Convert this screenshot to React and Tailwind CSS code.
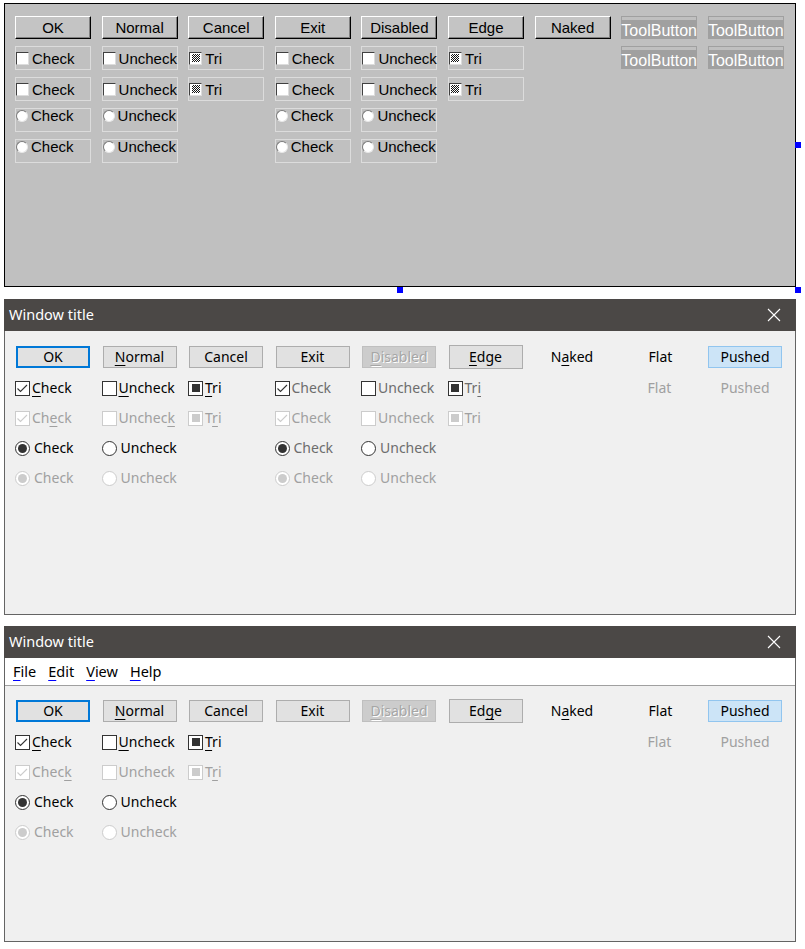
import React from 'react'

const CLASSIC = "font-['Liberation_Sans',Arial,sans-serif]"
const MODERN = "font-['Noto_Sans','Open_Sans',sans-serif]"

// text with one underlined mnemonic letter
function Label({ text, u, blue }) {
  if (u == null) return text
  return (
    <>
      {text.slice(0, u)}
      <span className={blue ? 'underline decoration-[#0000ff] underline-offset-[3px]' : 'underline underline-offset-[3px]'}>{text[u]}</span>
      {text.slice(u + 1)}
    </>
  )
}

/* ---------- classic (first panel) ---------- */

function ClassicButton({ label }) {
  return (
    <div className="flex h-[23px] w-[76px] items-center justify-center border border-t-white border-l-white border-r-black border-b-black bg-[#c4c4c4] text-[15px] leading-none text-black shadow-[inset_-1px_-1px_0_#808080]">
      {label}
    </div>
  )
}

function ClassicCheck({ label, kind }) {
  const radio = kind === 'radio'
  return (
    <div className={`flex h-[24px] w-[76px] gap-[3px] border border-[#dcdcdc] text-[15px] text-black ${radio ? 'items-start' : 'items-center'}`}>
      {radio ? (
        <span className="mt-[1px] h-[12px] w-[12px] shrink-0 rounded-full border border-t-[#7a7a7a] border-l-[#7a7a7a] border-r-[#e8e8e8] border-b-[#e8e8e8] bg-white" />
      ) : (
        <span className="flex h-[13px] w-[13px] shrink-0 items-center justify-center border border-t-[#404040] border-l-[#404040] border-r-[#dcdcdc] border-b-[#dcdcdc] bg-white">
          {kind === 'tri' && (
            <span className="h-[8px] w-[8px] bg-[image:repeating-conic-gradient(#111_0_25%,#fff_0_50%)] bg-[length:2px_2px]" />
          )}
        </span>
      )}
      <span className={radio ? 'leading-[13px]' : 'leading-none pt-[1px]'}>{label}</span>
    </div>
  )
}

function ToolButton() {
  return (
    <div className="flex h-[23px] w-[76px] flex-col border border-[#a0a0a0]">
      <div className="h-[3px] shrink-0" />
      <div className="flex flex-1 items-center justify-center whitespace-nowrap bg-[#a0a0a0] pt-[3px] text-[16px] leading-none text-white">ToolButton</div>
    </div>
  )
}

function ClassicPanel() {
  const checkRow = [
    <ClassicCheck key="a" label="Check" />,
    <ClassicCheck key="b" label="Uncheck" />,
    <ClassicCheck key="c" label="Tri" kind="tri" />,
    <ClassicCheck key="d" label="Check" />,
    <ClassicCheck key="e" label="Uncheck" />,
    <ClassicCheck key="f" label="Tri" kind="tri" />,
  ]
  const radioRow = (k) => [
    <ClassicCheck key={k + 'a'} label="Check" kind="radio" />,
    <ClassicCheck key={k + 'b'} label="Uncheck" kind="radio" />,
    <div key={k + 'c'} />,
    <ClassicCheck key={k + 'd'} label="Check" kind="radio" />,
    <ClassicCheck key={k + 'e'} label="Uncheck" kind="radio" />,
    <div key={k + 'f'} />,
    <div key={k + 'g'} />,
    <div key={k + 'h'} />,
    <div key={k + 'i'} />,
  ]
  return (
    <div className={`relative h-[284px] w-[792px] border border-black bg-[#c0c0c0] pl-[10px] pt-[12px] ${CLASSIC}`}>
      <div className="grid grid-cols-[repeat(9,76px)] grid-rows-[23px_24px_24px_24px_24px] gap-x-[10.6px] gap-y-[7px]">
        {['OK', 'Normal', 'Cancel', 'Exit', 'Disabled', 'Edge', 'Naked'].map((b) => (
          <ClassicButton key={b} label={b} />
        ))}
        <ToolButton />
        <ToolButton />
        {checkRow}
        <div />
        <ToolButton />
        <ToolButton />
        {checkRow.map((c, i) => React.cloneElement(c, { key: 'r2' + i }))}
        <div />
        <div />
        <div />
        {radioRow('r3')}
        {radioRow('r4')}
      </div>
      {/* selection handles */}
      <span className="absolute left-[790px] top-[138px] h-[6px] w-[6px] bg-[#0000ff]" />
      <span className="absolute left-[392px] top-[283px] h-[6px] w-[6px] bg-[#0000ff]" />
      <span className="absolute left-[790px] top-[283px] h-[6px] w-[6px] bg-[#0000ff]" />
    </div>
  )
}

/* ---------- modern (window panels) ---------- */

const btnStyles = {
  normal: 'border border-[#adadad] bg-[#e1e1e1] text-black',
  ok: 'border-2 border-[#0078d7] bg-[#e1e1e1] text-black',
  disabled: 'border border-[#bfbfbf] bg-[#cccccc] text-[#a6a6a6] [text-shadow:1px_1px_0_#ffffff]',
  edge: 'border border-[#adadad] bg-[#e1e1e1] text-black h-[24px] -mt-px',
  naked: 'text-black',
  pushed: 'border border-[#91c5ef] bg-[#cce4f7] text-black',
  flatOff: 'text-[#a0a0a0]',
}

function Btn({ text, u, variant = 'normal' }) {
  return (
    <div className={`flex h-[22px] w-[74px] items-center justify-center text-[14px] leading-none ${btnStyles[variant]}`}>
      <Label text={text} u={u} />
    </div>
  )
}

const toneText = { normal: 'text-black', muted: 'text-[#6d6d6d]', off: 'text-[#a0a0a0]' }

function MCheck({ text, u, kind = 'check', on, tone = 'normal' }) {
  const off = tone === 'off'
  const ink = off ? '#cccccc' : '#333333'
  if (kind === 'radio') {
    return (
      <div className={`-ml-px flex h-[24px] items-center gap-[4px] text-[14px] leading-none ${toneText[tone]}`}>
        <span className={`flex h-[15px] w-[15px] shrink-0 items-center justify-center rounded-full border bg-white ${off ? 'border-[#cccccc]' : 'border-[#333333]'}`}>
          {on && <span className={`h-[9px] w-[9px] rounded-full ${off ? 'bg-[#cccccc]' : 'bg-[#333333]'}`} />}
        </span>
        <span><Label text={text} u={u} /></span>
      </div>
    )
  }
  return (
    <div className={`-ml-px flex h-[24px] items-center gap-[2px] text-[14px] leading-none ${toneText[tone]}`}>
      <span className={`flex h-[15px] w-[15px] shrink-0 items-center justify-center border bg-white ${off ? 'border-[#cccccc]' : 'border-[#333333]'}`}>
        {kind === 'check' && on && (
          <svg width="13" height="13" viewBox="0 0 13 13">
            <path d="M1.5 6.5 L4.5 9.5 L11 3" fill="none" stroke={ink} strokeWidth="1.1" />
          </svg>
        )}
        {kind === 'tri' && <span className={`h-[8px] w-[8px] ${off ? 'bg-[#cccccc]' : 'bg-[#333333]'}`} />}
      </span>
      <span><Label text={text} u={u} /></span>
    </div>
  )
}

function CenterText({ text, u, off }) {
  return (
    <div className={`flex h-[22px] w-[74px] items-center justify-center text-[14px] leading-none ${off ? 'text-[#a0a0a0]' : 'text-black'}`}>
      <Label text={text} u={u} />
    </div>
  )
}

function TitleBar() {
  return (
    <div className="flex h-[32px] items-center justify-between bg-[#4b4846] pl-[5px] pr-[15px] text-[14.5px] text-white">
      <span>Window title</span>
      <svg width="14" height="14" viewBox="0 0 14 14">
        <path d="M1 1 L13 13 M13 1 L1 13" stroke="#ffffff" strokeWidth="1.1" />
      </svg>
    </div>
  )
}

function ButtonRow({ edgeU }) {
  return (
    <>
      <Btn text="OK" variant="ok" />
      <Btn text="Normal" u={0} />
      <Btn text="Cancel" />
      <Btn text="Exit" />
      <Btn text="Disabled" u={0} variant="disabled" />
      <Btn text="Edge" u={edgeU} variant="edge" />
      <CenterText text="Naked" u={1} />
      <div className="pl-[2px]"><CenterText text="Flat" /></div>
      <Btn text="Pushed" variant="pushed" />
    </>
  )
}

function FlatPushedOff() {
  return (
    <>
      <div className="flex h-[24px] w-[74px] items-center justify-center pl-[2px] text-[14px] leading-none text-[#a0a0a0]">Flat</div>
      <div className="flex h-[24px] w-[74px] items-center justify-center text-[14px] leading-none text-[#a0a0a0]">Pushed</div>
    </>
  )
}

function FullWindow() {
  return (
    <div className={`w-[792px] ${MODERN}`}>
      <TitleBar />
      <div className="h-[284px] border-x border-b border-[#646464] bg-[#f0f0f0] pl-[11px] pt-[15px]">
        <div className="grid grid-cols-[repeat(9,74px)] grid-rows-[repeat(5,24px)] gap-x-[12.5px] gap-y-[6px]">
          <ButtonRow edgeU={0} />

          <MCheck text="Check" u={0} on />
          <MCheck text="Uncheck" u={0} />
          <MCheck text="Tri" u={0} kind="tri" />
          <MCheck text="Check" on tone="muted" />
          <MCheck text="Uncheck" tone="muted" />
          <MCheck text="Tri" u={2} kind="tri" tone="muted" />
          <div />
          <FlatPushedOff />

          <MCheck text="Check" u={2} on tone="off" />
          <MCheck text="Uncheck" u={6} tone="off" />
          <MCheck text="Tri" u={1} kind="tri" tone="off" />
          <MCheck text="Check" on tone="off" />
          <MCheck text="Uncheck" tone="off" />
          <MCheck text="Tri" kind="tri" tone="off" />
          <div />
          <div />
          <div />

          <MCheck text="Check" kind="radio" on />
          <MCheck text="Uncheck" kind="radio" />
          <div />
          <MCheck text="Check" kind="radio" on tone="muted" />
          <MCheck text="Uncheck" kind="radio" tone="muted" />
          <div />
          <div />
          <div />
          <div />

          <MCheck text="Check" kind="radio" on tone="off" />
          <MCheck text="Uncheck" kind="radio" tone="off" />
          <div />
          <MCheck text="Check" kind="radio" on tone="off" />
          <MCheck text="Uncheck" kind="radio" tone="off" />
        </div>
      </div>
    </div>
  )
}

function MenuWindow() {
  return (
    <div className={`w-[792px] ${MODERN}`}>
      <TitleBar />
      <div className="border-x border-b border-[#646464]">
        <div className="flex h-[28px] items-center gap-[12px] border-b border-[#a0a0a0] bg-white pl-[8px] text-[14.5px] leading-none text-black">
          <span><Label text="File" u={0} blue /></span>
          <span><Label text="Edit" u={0} blue /></span>
          <span><Label text="View" u={0} blue /></span>
          <span><Label text="Help" u={0} blue /></span>
        </div>
        <div className="h-[255px] bg-[#f0f0f0] pl-[11px] pt-[14px]">
          <div className="grid grid-cols-[repeat(9,74px)] grid-rows-[repeat(5,24px)] gap-x-[12.5px] gap-y-[6px]">
            <ButtonRow edgeU={2} />

            <MCheck text="Check" u={0} on />
            <MCheck text="Uncheck" u={0} />
            <MCheck text="Tri" u={0} kind="tri" />
            <div />
            <div />
            <div />
            <div />
            <FlatPushedOff />

            <MCheck text="Check" u={4} on tone="off" />
            <MCheck text="Uncheck" tone="off" />
            <MCheck text="Tri" u={1} kind="tri" tone="off" />
            <div />
            <div />
            <div />
            <div />
            <div />
            <div />

            <MCheck text="Check" kind="radio" on />
            <MCheck text="Uncheck" kind="radio" />
            <div />
            <div />
            <div />
            <div />
            <div />
            <div />
            <div />

            <MCheck text="Check" kind="radio" on tone="off" />
            <MCheck text="Uncheck" kind="radio" tone="off" />
          </div>
        </div>
      </div>
    </div>
  )
}

export default function App() {
  return (
    <div className="h-[949px] w-[805px] overflow-hidden bg-white pl-[4px] pt-[3px]">
      <ClassicPanel />
      <div className="mt-[12px]">
        <FullWindow />
      </div>
      <div className="mt-[11px]">
        <MenuWindow />
      </div>
    </div>
  )
}
